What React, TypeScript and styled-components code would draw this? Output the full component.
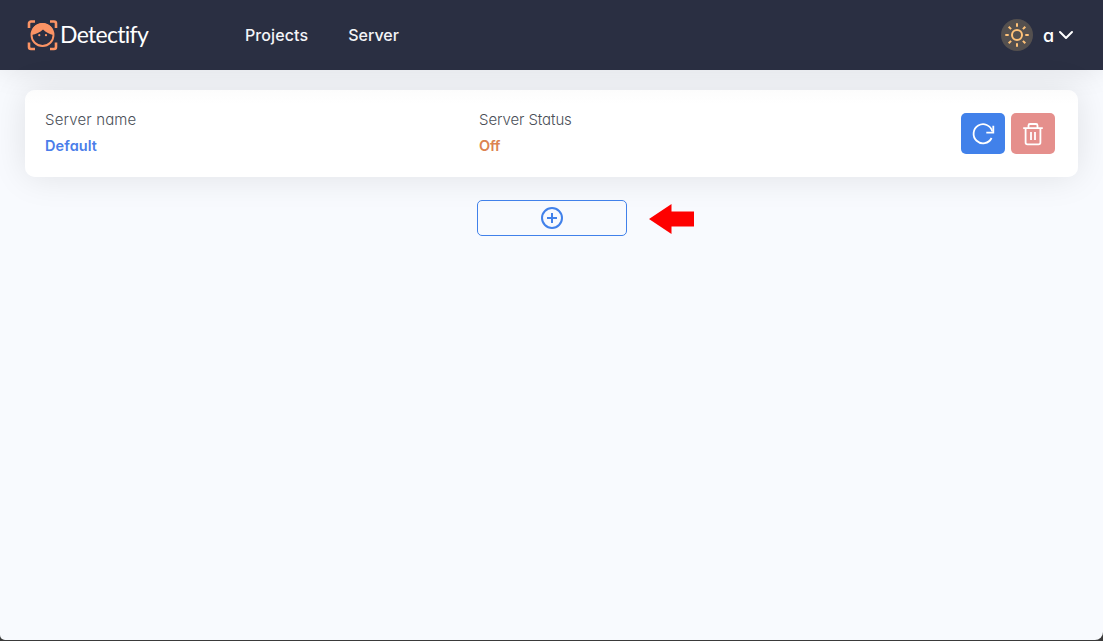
import React from "react";
import styled, { createGlobalStyle } from "styled-components";

const GlobalStyle = createGlobalStyle`
  * { box-sizing: border-box; }
  html, body { margin: 0; height: 100%; background: #3a3a3a; overflow: hidden; }
  body { font-family: Inter, "Liberation Sans", sans-serif; font-feature-settings: "cv11"; }
  #root { height: 100%; }
  svg { display: block; flex: none; }
`;

const Page = styled.div`
  height: 640px;
  display: flex;
  flex-direction: column;
  background: #f8fafe;
  border-radius: 0 0 8px 5px;
  overflow: hidden;
`;

const Header = styled.header`
  height: 70px;
  flex: none;
  display: flex;
  align-items: center;
  padding: 0 29px 0 27px;
  background: #2a2f42;
  color: #fff;
  box-shadow: 0 0 30px rgba(0, 0, 0, 0.1);
`;

const Brand = styled.div`
  width: 218px;
  display: flex;
  align-items: center;
  gap: 2px;
`;

const BrandName = styled.span`
  padding-bottom: 2px;
  font: 400 23px/30px Lato, sans-serif;
  letter-spacing: -0.7px;
  white-space: nowrap;
`;

const Nav = styled.nav`
  display: flex;
  gap: 40px;
  flex: 1;
`;

const NavLink = styled.a<{ $spacing: number }>`
  font-size: 16px;
  line-height: 24px;
  font-weight: 500;
  letter-spacing: ${(p) => p.$spacing}px;
  color: #f4f5f8;
`;

const ThemeButton = styled.button`
  width: 32px;
  height: 32px;
  padding: 0;
  border: 0;
  border-radius: 50%;
  background: #54504f;
  display: flex;
  align-items: center;
  justify-content: center;
`;

const UserMenu = styled.div`
  width: 31px;
  margin-left: 10px;
  display: flex;
  align-items: center;
  justify-content: space-between;
  font-size: 18px;
  font-weight: 500;
`;

const Main = styled.main`
  flex: 1;
  padding: 20px 25px;
  display: flex;
  flex-direction: column;
`;

const ServerCard = styled.section`
  height: 87px;
  display: grid;
  grid-template-columns: 434px 1fr auto;
  align-items: center;
  padding: 0 23px 0 20px;
  border-radius: 10px;
  background: linear-gradient(#fcfcfc, #fff 14px);
  box-shadow: 0 0 35px rgba(0, 0, 0, 0.1);
`;

const Field = styled.div`
  align-self: start;
  padding-top: 17px;
`;

const Label = styled.div<{ $spacing: number }>`
  font-size: 15px;
  line-height: 26px;
  font-weight: 350;
  color: #4a4f58;
  letter-spacing: ${(p) => p.$spacing}px;
`;

const Value = styled(Label)<{ $color: string }>`
  font-size: 14.5px;
  font-weight: 600;
  color: ${(p) => p.$color};
`;

const Actions = styled.div`
  display: flex;
  gap: 6px;
`;

const ActionButton = styled.button<{ $color: string }>`
  width: 44px;
  height: 41px;
  padding: 0;
  border: 0;
  border-radius: 5px;
  background: ${(p) => p.$color};
  display: flex;
  align-items: center;
  justify-content: center;
`;

const AddRow = styled.div`
  display: grid;
  grid-template-columns: 1fr 150px 1fr;
  column-gap: 22px;
  align-items: end;
  margin-top: 23px;
  padding-left: 1px;
`;

const AddButton = styled.button`
  grid-column: 2;
  height: 36px;
  padding: 0;
  border: 1px solid #4181ea;
  border-radius: 5px;
  background: transparent;
  display: flex;
  align-items: center;
  justify-content: center;
`;

const ArrowIcon = styled.svg`
  margin-bottom: 2px;
`;

const LogoIcon = () => (
  <svg width="31" height="31" viewBox="0 0 31 31" fill="none">
    <path
      d="M2 8V3.500a2 2 0 0 1 2-2h4M23 1.500h4a2 2 0 0 1 2 2V8M29 22.500V27a2 2 0 0 1-2 2h-4M8 29H4a2 2 0 0 1-2-2v-4.500"
      stroke="#fb9465" strokeWidth="2.600"
    />
    <circle cx="15.500" cy="15" r="11" stroke="#fb9465" strokeWidth="1.900" />
    <path d="M4.500 15C4 8.500 9 3 15.500 3S27 8.500 26.500 15C22.500 14 19 12.500 16 9.500 13 12.500 9 14 4.500 15Z" fill="#fb9465" />
    <circle cx="12.300" cy="15.200" r="1.100" fill="#fb9465" />
    <circle cx="19" cy="15.200" r="1.100" fill="#fb9465" />
  </svg>
);

const SunIcon = () => (
  <svg width="24" height="24" viewBox="0 0 24 24" fill="none" stroke="#ffc278" strokeWidth="2">
    <circle cx="12" cy="12" r="5" />
    <path d="M12 .3v3.400M12 20.300v3.400M.3 12h3.400M20.300 12h3.400M3.700 3.700l2.400 2.400M17.900 17.900l2.400 2.400M3.700 20.300l2.400-2.400M17.900 6.100l2.400-2.400" />
  </svg>
);

const ChevronIcon = () => (
  <svg width="16" height="16" viewBox="0 0 16 16" fill="none" stroke="#fff" strokeWidth="2" strokeLinecap="round" strokeLinejoin="round">
    <path d="m2 5 6 6 6-6" />
  </svg>
);

const RefreshIcon = () => (
  <svg width="24" height="24" viewBox="0 0 24 24" fill="none" stroke="#fff" strokeWidth="1.800">
    <path d="M20.600 16A9.500 9.500 0 1 1 21.300 9.400" />
    <path d="M22.300 3.800V10.700H15.300" />
  </svg>
);

const TrashIcon = () => (
  <svg width="24" height="24" viewBox="0 0 24 24" fill="none" stroke="#fff" strokeWidth="1.800">
    <path d="M2.200 6.200h19.600M7.500 6V3.500A1.500 1.500 0 0 1 9 2h6a1.500 1.500 0 0 1 1.500 1.500V6M4.600 6.200V20.500a1.800 1.800 0 0 0 1.800 1.800h11.200a1.800 1.800 0 0 0 1.800-1.800V6.200M10 10v8M14 10v8" />
  </svg>
);

const PlusIcon = () => (
  <svg width="24" height="24" viewBox="0 0 24 24" fill="none" stroke="#4181ea" strokeWidth="2">
    <circle cx="12" cy="12" r="10" />
    <path d="M12 7v10M7 12h10" />
  </svg>
);

const PointerArrow = () => (
  <ArrowIcon width="45" height="30" viewBox="0 0 45 30">
    <path d="M0 15 22.500 0v7.500H45v15H22.500V30Z" fill="#fe0000" />
  </ArrowIcon>
);

export default function App() {
  return (
    <>
      <GlobalStyle />
      <Page>
        <Header>
          <Brand>
            <LogoIcon />
            <BrandName>Detectify</BrandName>
          </Brand>
          <Nav>
            <NavLink $spacing={0.1}>Projects</NavLink>
            <NavLink $spacing={0}>Server</NavLink>
          </Nav>
          <ThemeButton aria-label="Toggle theme">
            <SunIcon />
          </ThemeButton>
          <UserMenu>
            a
            <ChevronIcon />
          </UserMenu>
        </Header>
        <Main>
          <ServerCard>
            <Field>
              <Label $spacing={0.15}>Server name</Label>
              <Value $spacing={0.1} $color="#4a7dea">Default</Value>
            </Field>
            <Field>
              <Label $spacing={-0.1}>Server Status</Label>
              <Value $spacing={-0.2} $color="#dc8350">Off</Value>
            </Field>
            <Actions>
              <ActionButton $color="#4181ea" aria-label="Refresh server">
                <RefreshIcon />
              </ActionButton>
              <ActionButton $color="#e58f8c" aria-label="Delete server">
                <TrashIcon />
              </ActionButton>
            </Actions>
          </ServerCard>
          <AddRow>
            <AddButton aria-label="Add server">
              <PlusIcon />
            </AddButton>
            <PointerArrow />
          </AddRow>
        </Main>
      </Page>
    </>
  );
}
